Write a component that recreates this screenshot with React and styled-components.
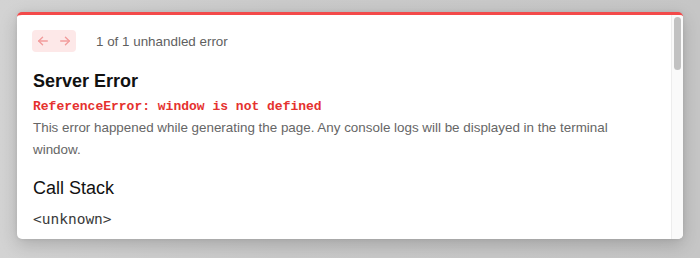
import React from 'react';
import styled, { createGlobalStyle } from 'styled-components';

const Global = createGlobalStyle`
  html, body {
    margin: 0;
    padding: 0;
    background: #cbcbcb;
    font-family: 'Liberation Sans', Arial, sans-serif;
  }
`;

// --- overlay ---
const Backdrop = styled.div`
  width: 700px;
  height: 258px;
  box-sizing: border-box;
  padding: 12px 17px 19px;
  background: linear-gradient(90deg, #d3d3d3 0%, #cacaca 40%, #c6c6c6 100%);
`;

const Dialog = styled.div`
  height: 100%;
  display: flex;
  background: #fff;
  border-top: 3px solid #f34a4a;
  border-radius: 5px;
  overflow: hidden;
  box-sizing: border-box;
  box-shadow: 0 6px 18px rgba(0, 0, 0, 0.18), 0 0 4px rgba(0, 0, 0, 0.08);
`;

const Body = styled.div`
  flex: 1;
  padding: 15px 24px 0 16px;
  min-width: 0;
`;

const Scrollbar = styled.div`
  width: 12px;
  flex-shrink: 0;
  background: #fafafa;
  border-left: 1px solid #ededed;
  padding: 2px 0 0 2px;
  box-sizing: border-box;
`;

const Thumb = styled.div`
  width: 7px;
  height: 53px;
  border-radius: 4px;
  background: #c2c2c2;
`;

// --- nav ---
const NavRow = styled.div`
  display: flex;
  align-items: center;
  height: 22px;
`;

const NavGroup = styled.div`
  display: flex;
  margin-left: -1px;
  margin-right: 20px;
`;

const NavBtn = styled.button`
  width: 22px;
  height: 22px;
  padding: 0;
  border: none;
  display: flex;
  align-items: center;
  justify-content: center;
  background: #fde8e8;
  color: #f29c9c;
  border-radius: ${p => (p.$side === 'left' ? '4px 0 0 4px' : '0 4px 4px 0')};
`;

const NavText = styled.span`
  font-size: 13.4px;
  color: #5f5f5f;
  padding-top: 1px;
`;

const Title = styled.h1`
  margin: 18px 0 0;
  font-size: 18px;
  line-height: 22px;
  font-weight: 700;
  color: #111;
`;

const ErrMsg = styled.p`
  margin: 6px 0 0;
  font-family: 'Liberation Mono', 'DejaVu Sans Mono', monospace;
  font-size: 13px;
  line-height: 18px;
  font-weight: 700;
  color: #e5312e;
`;

const Desc = styled.p`
  margin: 1px 0 0;
  font-size: 13.4px;
  line-height: 22px;
  color: #666;
`;

const SubTitle = styled.h2`
  margin: 16px 0 0;
  font-size: 18px;
  line-height: 22px;
  font-weight: 400;
  color: #111;
`;

const Frame = styled.div`
  margin-top: 10px;
  font-family: 'DejaVu Sans Mono', 'Liberation Mono', monospace;
  font-size: 14.5px;
  line-height: 20px;
  color: #3a3a3a;
`;

const Arrow = ({ dir }) => (
  <svg width="12" height="12" viewBox="0 0 14 14" fill="none" stroke="currentColor" strokeWidth="1.6" strokeLinecap="round" strokeLinejoin="round">
    {dir === 'left' ? (
      <>
        <path d="M12 7H2" />
        <path d="M6.5 2.5L2 7l4.5 4.5" />
      </>
    ) : (
      <>
        <path d="M2 7h10" />
        <path d="M7.5 2.5L12 7l-4.5 4.5" />
      </>
    )}
  </svg>
);

export default function App() {
  return (
    <>
      <Global />
      <Backdrop>
        <Dialog>
          <Body>
            <NavRow>
              <NavGroup>
                <NavBtn $side="left"><Arrow dir="left" /></NavBtn>
                <NavBtn $side="right"><Arrow dir="right" /></NavBtn>
              </NavGroup>
              <NavText>1 of 1 unhandled error</NavText>
            </NavRow>
            <Title>Server Error</Title>
            <ErrMsg>ReferenceError: window is not defined</ErrMsg>
            <Desc>
              This error happened while generating the page. Any console logs will be displayed in the terminal window.
            </Desc>
            <SubTitle>Call Stack</SubTitle>
            <Frame>&lt;unknown&gt;</Frame>
          </Body>
          <Scrollbar>
            <Thumb />
          </Scrollbar>
        </Dialog>
      </Backdrop>
    </>
  );
}
